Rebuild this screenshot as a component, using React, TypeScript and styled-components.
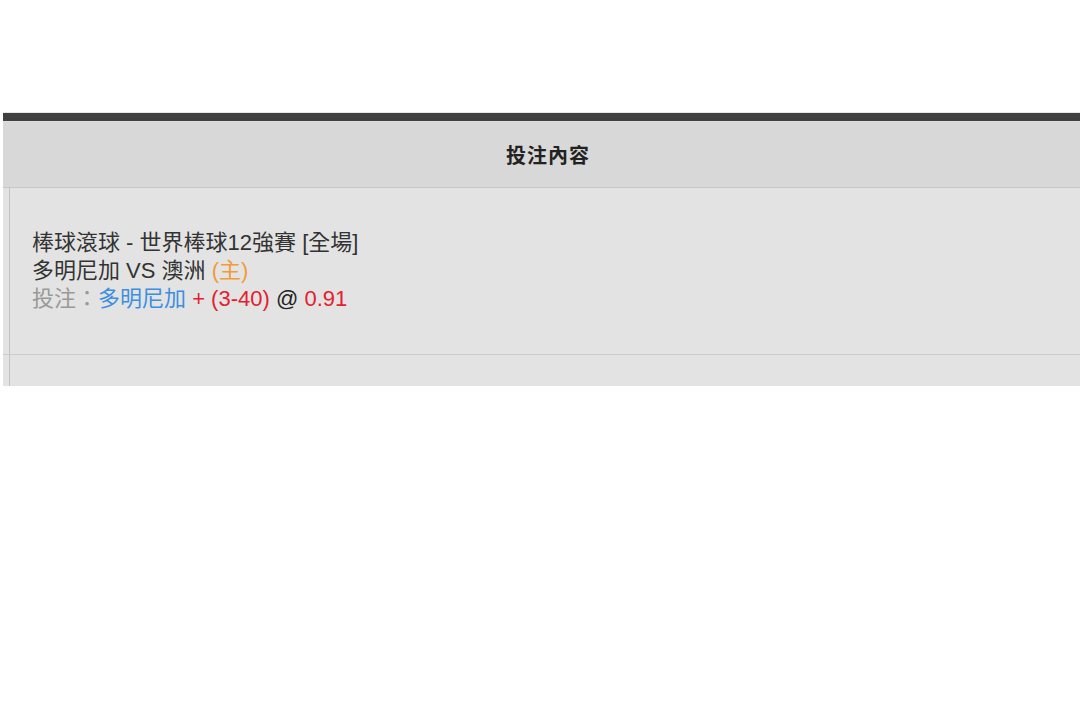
import styled, { createGlobalStyle } from "styled-components";

const GlobalStyle = createGlobalStyle`
  html, body {
    margin: 0;
    padding: 0;
    background: #fff;
    overflow: hidden;
  }
  body {
    font-family: "Liberation Sans", Arial, "Noto Sans CJK TC", sans-serif;
  }
`;

const Page = styled.div`
  width: 1080px;
  height: 705px;
  overflow: hidden;
  padding: 112px 0 0 3px;
  box-sizing: border-box;
`;

const Panel = styled.div`
  width: 1090px;
  border-top: 1px solid #e6e6e6;
`;

const TopBar = styled.div`
  height: 8px;
  background: #404040;
`;

const Header = styled.div`
  height: 65px;
  background: #d8d8d8;
  border-top: 1px solid #dedede;
  border-bottom: 1px solid #c6c6c6;
  display: flex;
  align-items: center;
  justify-content: center;
  font-family: "Noto Sans CJK TC", "Liberation Sans", sans-serif;
  font-size: 20px;
  font-weight: bold;
  letter-spacing: 1px;
  color: #222;
`;

const Row = styled.div<{ $height: number }>`
  display: grid;
  grid-template-columns: 7px 1fr;
  height: ${({ $height }) => $height}px;
  background: #e3e3e3;
  border-bottom: 1px solid #cbcbcb;
  &:last-child {
    border-bottom: none;
  }
`;

const SideCell = styled.div`
  border-right: 1px solid #c2c2c2;
`;

const ContentCell = styled.div`
  display: flex;
  flex-direction: column;
  justify-content: center;
  padding: 0 22px;
  font-size: 22px;
  line-height: 28px;
  color: #333;
`;

const Line = styled.div`
  white-space: nowrap;
`;

const Tone = styled.span<{ $color: string }>`
  color: ${({ $color }) => $color};
`;

export default function App() {
  return (
    <>
      <GlobalStyle />
      <Page>
        <Panel>
          <TopBar />
          <Header>投注內容</Header>
          <Row $height={166}>
            <SideCell />
            <ContentCell>
              <Line>棒球滾球 - 世界棒球12強賽 [全場]</Line>
              <Line>
                多明尼加 VS 澳洲 <Tone $color="#f29b38">(主)</Tone>
              </Line>
              <Line>
                <Tone $color="#999">投注：</Tone>
                <Tone $color="#3d8fe0">多明尼加</Tone>{" "}
                <Tone $color="#e4202e">+ (3-40)</Tone>{" "}
                <Tone $color="#222">@</Tone>{" "}
                <Tone $color="#e4202e">0.91</Tone>
              </Line>
            </ContentCell>
          </Row>
          <Row $height={31}>
            <SideCell />
            <ContentCell />
          </Row>
        </Panel>
      </Page>
    </>
  );
}
